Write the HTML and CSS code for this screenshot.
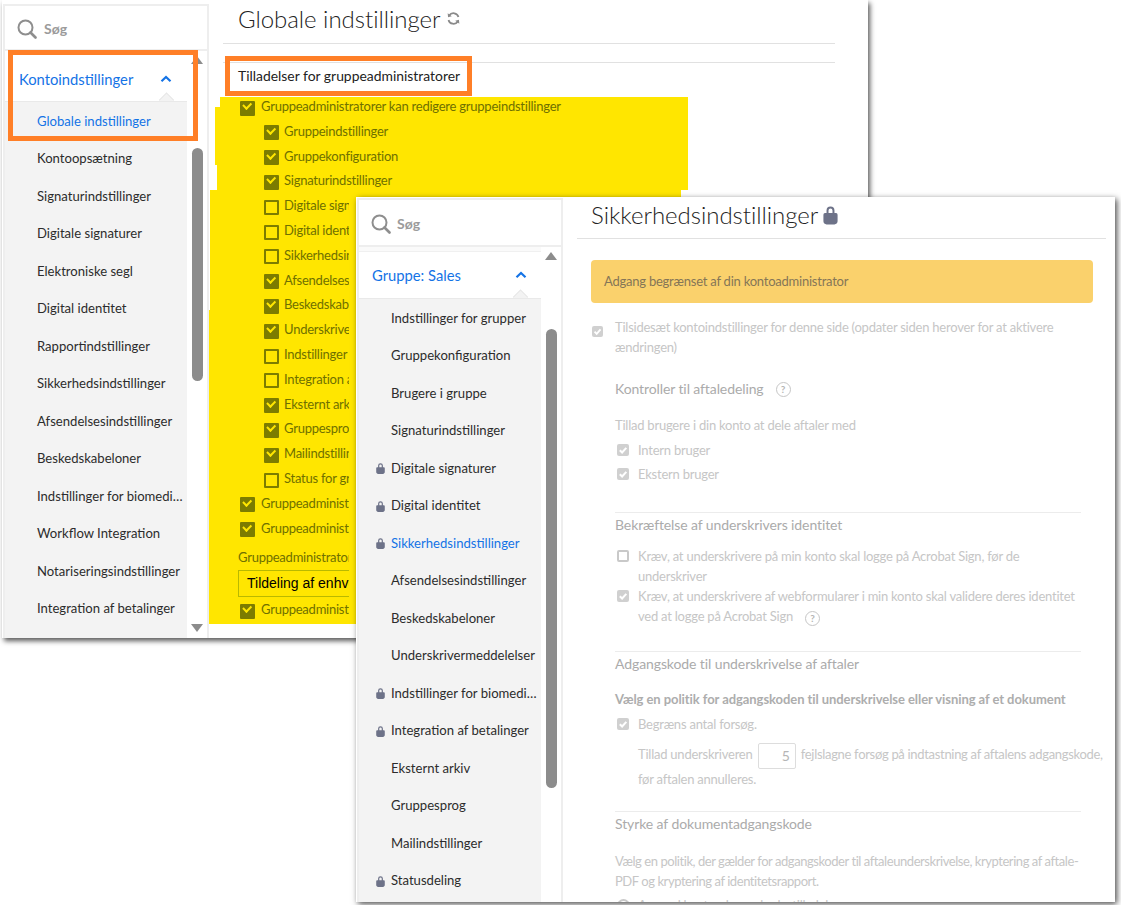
FILE: index.html
```html
<!DOCTYPE html>
<html lang="da">
<head>
<meta charset="utf-8">
<title>Indstillinger</title>
<link rel="stylesheet" href="styles.css">
</head>
<body>
<svg width="0" height="0" class="defs">
  <symbol id="lock" viewBox="0 0 12 14"><path d="M3.200 6V4.200a2.800 2.800 0 0 1 5.600 0V6h1.100a1.200 1.200 0 0 1 1.100 1.200v4.600c0 1.200-1 2.200-2.200 2.200H3.200c-1.200 0-2.200-1-2.200-2.200V7.200A1.200 1.200 0 0 1 2.100 6zm1.400 0h2.800V4.200a1.400 1.400 0 0 0-2.800 0z" fill="currentColor" fill-rule="evenodd"/></symbol>
  <symbol id="tick" viewBox="0 0 12 12"><path d="M2.800 6.200l2.300 2.300 4.200-4.700" fill="none" stroke="currentColor" stroke-width="2"/></symbol>
  <symbol id="search" viewBox="0 0 20 20"><circle cx="8.500" cy="8.500" r="7" fill="none" stroke="currentColor" stroke-width="2"/><path d="M13.500 13.500l5 5" stroke="currentColor" stroke-width="2.600" stroke-linecap="round"/></symbol>
  <symbol id="chev" viewBox="0 0 12 8"><path d="M1.500 6.200L6 2l4.500 4.200" fill="none" stroke="currentColor" stroke-width="2.200"/></symbol>
</svg>

<section class="window win-a">
  <svg class="yellow" viewBox="0 0 866 638" width="866" height="638"><polygon fill="#ffe600" points="218,97 686,97 686,190 679,190 679,230 355,230 355,624 203,624 203,552 206,552 206,521 204,521 204,405 207,405 207,310 208,310 208,190 215,190 215,165 213,165 213,107 218,107"/></svg>
  <aside class="sidebar">
    <div class="search"><svg class="search-icon"><use href="#search"/></svg><span>Søg</span></div>
    <div class="nav-wrap">
      <div class="nav">
        <div class="nav-head"><span>Kontoindstillinger</span><svg class="chev"><use href="#chev"/></svg><i class="notch"></i></div>
        <ul class="items">
          <li class="active">Globale indstillinger</li>
          <li>Kontoopsætning</li>
          <li>Signaturindstillinger</li>
          <li>Digitale signaturer</li>
          <li>Elektroniske segl</li>
          <li>Digital identitet</li>
          <li>Rapportindstillinger</li>
          <li>Sikkerhedsindstillinger</li>
          <li>Afsendelsesindstillinger</li>
          <li>Beskedskabeloner</li>
          <li>Indstillinger for biomedi…</li>
          <li>Workflow Integration</li>
          <li>Notariseringsindstillinger</li>
          <li>Integration af betalinger</li>
        </ul>
      </div>
      <div class="scroll"><i class="up"></i><b class="thumb"></b><i class="down"></i></div>
    </div>
  </aside>
  <main class="main">
    <h1>Globale indstillinger<svg class="refresh" viewBox="0 0 16 16"><path d="M13.300 6.500A5.500 5.500 0 0 0 3.400 4.800M2.700 9.500a5.500 5.500 0 0 0 9.900 1.700" fill="none" stroke="currentColor" stroke-width="1.900"/><path d="M1.800 2.500l.4 4.200 4-1.200zM14.200 13.500l-.4-4.200-4 1.200z" fill="currentColor"/></svg></h1>
    <h2>Tilladelser for gruppeadministratorer</h2>
    <div class="perms">
      <label class="perm on">Gruppeadministratorer kan redigere gruppeindstillinger</label>
      <label class="perm sub on">Gruppeindstillinger</label>
      <label class="perm sub on">Gruppekonfiguration</label>
      <label class="perm sub on">Signaturindstillinger</label>
      <label class="perm sub">Digitale signaturer</label>
      <label class="perm sub">Digital identitet</label>
      <label class="perm sub">Sikkerhedsindstillinger</label>
      <label class="perm sub on">Afsendelsesindstillinger</label>
      <label class="perm sub on">Beskedskabeloner</label>
      <label class="perm sub on">Underskrivermeddelelser</label>
      <label class="perm sub">Indstillinger for biometri</label>
      <label class="perm sub">Integration af betalinger</label>
      <label class="perm sub on">Eksternt arkiv</label>
      <label class="perm sub on">Gruppesprog</label>
      <label class="perm sub on">Mailindstillinger</label>
      <label class="perm sub">Status for gruppe</label>
      <label class="perm on">Gruppeadministratorer kan redigere brugere</label>
      <label class="perm on">Gruppeadministratorer kan se rapporter</label>
      <p class="perm-label">Gruppeadministratorer kan tildele</p>
      <div class="select">Tildeling af enhver bruger</div>
      <label class="perm on">Gruppeadministratorer kan oprette grupper</label>
    </div>
  </main>
  <i class="edge"></i>
  <i class="mark mark-nav"></i>
  <i class="mark mark-title"></i>
</section>

<section class="window win-b">
  <aside class="sidebar">
    <div class="search"><svg class="search-icon"><use href="#search"/></svg><span>Søg</span></div>
    <div class="nav-wrap">
      <div class="nav">
        <div class="nav-head"><span>Gruppe: Sales</span><svg class="chev"><use href="#chev"/></svg><i class="notch"></i></div>
        <ul class="items">
          <li>Indstillinger for grupper</li>
          <li>Gruppekonfiguration</li>
          <li>Brugere i gruppe</li>
          <li>Signaturindstillinger</li>
          <li class="locked"><svg class="lock"><use href="#lock"/></svg>Digitale signaturer</li>
          <li class="locked"><svg class="lock"><use href="#lock"/></svg>Digital identitet</li>
          <li class="locked active"><svg class="lock"><use href="#lock"/></svg>Sikkerhedsindstillinger</li>
          <li>Afsendelsesindstillinger</li>
          <li>Beskedskabeloner</li>
          <li>Underskrivermeddelelser</li>
          <li class="locked"><svg class="lock"><use href="#lock"/></svg>Indstillinger for biomedi…</li>
          <li class="locked"><svg class="lock"><use href="#lock"/></svg>Integration af betalinger</li>
          <li>Eksternt arkiv</li>
          <li>Gruppesprog</li>
          <li>Mailindstillinger</li>
          <li class="locked"><svg class="lock"><use href="#lock"/></svg>Statusdeling</li>
        </ul>
      </div>
      <div class="scroll"><i class="up"></i><b class="thumb"></b></div>
    </div>
  </aside>
  <main class="main">
    <h1>Sikkerhedsindstillinger<svg class="title-lock"><use href="#lock"/></svg></h1>
    <div class="banner">Adgang begrænset af din kontoadministrator</div>
    <div class="check override"><i class="box on"><svg><use href="#tick"/></svg></i><p>Tilsidesæt kontoindstillinger for denne side (opdater siden herover for at aktivere ændringen)</p></div>
    <div class="group first">
      <h3 class="h-share">Kontroller til aftaledeling<span class="help">?</span></h3>
      <p class="lead">Tillad brugere i din konto at dele aftaler med</p>
      <div class="check tight"><i class="box on"><svg><use href="#tick"/></svg></i><p>Intern bruger</p></div>
      <div class="check tight"><i class="box on"><svg><use href="#tick"/></svg></i><p>Ekstern bruger</p></div>
    </div>
    <div class="group rule verify">
      <h3>Bekræftelse af underskrivers identitet</h3>
      <div class="check"><i class="box"></i><p>Kræv, at underskrivere på min konto skal logge på Acrobat Sign, før de underskriver</p></div>
      <div class="check second"><i class="box on"><svg><use href="#tick"/></svg></i><p>Kræv, at underskrivere af webformularer i min konto skal validere deres identitet ved at logge på Acrobat Sign<span class="help help-inline">?</span></p></div>
    </div>
    <div class="group rule password">
      <h3>Adgangskode til underskrivelse af aftaler</h3>
      <p class="lead strong">Vælg en politik for adgangskoden til underskrivelse eller visning af et dokument</p>
      <div class="check tight"><i class="box on"><svg><use href="#tick"/></svg></i><p>Begræns antal forsøg.</p></div>
      <p class="attempts">Tillad underskriveren <span class="num">5</span> <span class="rest">fejlslagne forsøg på indtastning af aftalens adgangskode,</span> før aftalen annulleres.</p>
    </div>
    <div class="group rule last">
      <h3>Styrke af dokumentadgangskode</h3>
      <p class="lead wide">Vælg en politik, der gælder for adgangskoder til aftaleunderskrivelse, kryptering af aftale-PDF og kryptering af identitetsrapport.</p>
      <div class="check radio-row"><i class="radio"></i><p>Anvend kontoadgangskodestilladelser</p></div>
    </div>
  </main>
</section>
</body>
</html>
```
FILE: styles.css
```css
* { box-sizing: border-box; }
html, body { margin: 0; padding: 0; }
body { width: 1121px; height: 905px; position: relative; overflow: hidden; background: #fff; font-family: Lato, "Noto Sans", sans-serif; color: #2c2c2c; }
.defs { position: absolute; }
ul, p, h1, h2, h3 { margin: 0; padding: 0; }
li { list-style: none; }
.window { position: absolute; display: flex; background: #fff; overflow: hidden; }
.win-a { left: 2px; top: 0; width: 866px; height: 638px; padding: 4px 0 0 1px; box-shadow: 2px 3px 5px rgba(0,0,0,.65); }
.win-b { left: 356px; top: 197px; width: 759px; height: 705px; padding: 1px 0 0 1px; box-shadow: 2px 2px 6px rgba(0,0,0,.7); }
.yellow { position: absolute; left: 0; top: 0; }
.sidebar { position: relative; width: 206px; flex: none; border: 2px solid #eee; border-bottom: 0; display: flex; flex-direction: column; }
.search { display: flex; align-items: center; padding-left: 12px; border-bottom: 2px solid #eee; color: #8e8e8e; font-size: 14px; font-weight: 700; flex: none; }
.win-a .search { height: 45px; padding-top: 2px; gap: 7px; }
.win-b .search { height: 47px; padding-top: 2px; gap: 6px; }
.search span { color: #9b9b9b; }
.search-icon { width: 20px; height: 20px; }
.nav-wrap { flex: 1; display: flex; min-height: 0; background: #fff; }
.nav { width: 182px; flex: none; }
.nav-head { position: relative; display: flex; align-items: center; justify-content: space-between; color: #1473e6; font-size: 14.750px; background: #fff; }
.win-a .nav-head { height: 50px; padding: 6px 15px 0 14px; }
.win-b .nav-head { height: 51px; padding: 5px 14px 0 13px; box-shadow: inset 0 4px 0 #fafafa, inset 0 5px 0 #f0f0f0; }
.chev { width: 12px; height: 8px; color: #1473e6; }
.notch { position: absolute; right: 15px; bottom: -6px; width: 11px; height: 11px; background: #f3f3f3; transform: rotate(45deg); box-shadow: -1px -1px 0 #e6e6e6; }
.items { background: #f3f3f3; padding-top: .5px; font-size: 13.100px; position: relative; border-top: 1px solid #e9e9e9; height: 620px; }
.items li { height: 37.500px; line-height: 37px; padding-left: 32px; color: #2c2c2c; white-space: nowrap; }
.items li.active { color: #1473e6; }
.items li.locked { display: flex; align-items: center; padding-left: 16px; }
.lock { width: 11px; height: 12px; color: #6d7288; flex: none; margin-right: 5px; }
.scroll { flex: 1; display: flex; flex-direction: column; align-items: center; padding-top: 5px; position: relative; }
.scroll .up { width: 0; height: 0; border: 6px solid transparent; border-top: 0; border-bottom: 8px solid #8c8c8c; }
.scroll .down { position: absolute; bottom: 6px; width: 0; height: 0; border: 6px solid transparent; border-bottom: 0; border-top: 8px solid #8c8c8c; }
.thumb { display: block; width: 11px; background: #8c8c8c; border-radius: 6px; }
.win-a .thumb { margin-top: 84px; height: 233px; }
.win-b .thumb { margin-top: 69px; height: 459px; }
.main { position: relative; flex: 1; min-width: 0; }
h1 { font-weight: 300; font-size: 24px; letter-spacing: -.03px; color: #222; display: flex; align-items: center; white-space: nowrap; }
.win-a h1 { margin: 0 33px 0 14px; padding: 0 0 11px 15px; height: 40px; border-bottom: 1px solid #e1e1e1; }
.refresh { width: 15px; height: 15px; margin-left: 6px; color: #8a8a8a; }
.win-a h2 { margin: 18px 33px 0 14px; border-top: 1px solid #e1e1e1; font-weight: 400; font-size: 13.900px; color: #222; padding-left: 15px; height: 31.600px; line-height: 26px; }
.perms { padding-left: 31px; position: relative; color: #6f7000; font-size: 13px; letter-spacing: -.24px; }
.perm { display: flex; align-items: center; height: 24.800px; white-space: nowrap; position: relative; padding-left: 21px; }
.perm::before { content: ""; position: absolute; left: 0; top: 7px; width: 11px; height: 11px; border: 2px solid #7c7c00; border-radius: 1px; }
.perm.on::before { background: #7c7c00; }
.perm.on::after { content: ""; position: absolute; left: 2.500px; top: 8.500px; width: 6px; height: 3.500px; border-left: 2px solid #ffe600; border-bottom: 2px solid #ffe600; transform: rotate(-45deg); }
.perm.sub { margin-left: 24px; padding-left: 20px; }
.perm-label { margin: 10px 0 0 -2px; height: 14px; line-height: 14px; white-space: nowrap; }
.select { margin: 6px 0 0 -2px; height: 27px; width: 400px; border: 1px solid #b9b900; font: 14px/25px "Liberation Sans", sans-serif; letter-spacing: 0; color: #000; padding-left: 8px; }
.edge { position: absolute; left: 347px; top: 190px; width: 8px; height: 434px; background: #ffe600; }
.mark { position: absolute; border: 5px solid #ff7f27; }
.mark-nav { left: 6px; top: 50px; width: 190px; height: 91px; }
.mark-title { left: 223px; top: 56px; width: 247px; height: 40px; }
.win-b .main { padding: 0 9px 0 14px; color: #c6c6c6; font-size: 13px; letter-spacing: -.23px; }
.win-b h1 { height: 41px; padding: 0 0 8px 14px; border-bottom: 1px solid #e1e1e1; color: #222; }
.title-lock { width: 17px; height: 21px; color: #6d7288; margin-left: 4px; }
.banner { margin: 21px 13px 0 14px; height: 43px; line-height: 43px; background: #fad16c; border-radius: 4px; padding-left: 13px; color: #857657; }
.check { display: flex; position: relative; padding-left: 23px; line-height: 20px; margin-top: 10px; }
.box { position: absolute; left: 2px; top: 4px; width: 12px; height: 12px; border-radius: 2px; border: 2px solid #c9c9c9; background: #fff; color: #fff; display: block; }
.box.on { background: #d0d0d0; border: 0; }
.box svg { width: 12px; height: 12px; display: block; }
.radio { position: absolute; left: 2px; top: 4px; width: 13px; height: 13px; border-radius: 50%; border: 2px solid #c9c9c9; }
.override { margin: 14px 9px 0 14px; padding-left: 24px; }
.override .box { top: 9px; left: 1px; width: 11px; height: 11px; }
.override .box svg { width: 11px; height: 11px; }
.group { margin: 0 25px 0 38px; }
.group.rule { border-top: 1px solid #ececec; }
.group.first { padding-bottom: 28px; }
.group.verify { padding-bottom: 25px; }
.group.password { padding-bottom: 20px; }
.group h3 { font-size: 14px; font-weight: 400; letter-spacing: -.1px; color: #ababab; line-height: 24px; display: flex; align-items: center; }
.group h3 + .check { margin-top: 9px; }
.group .check.second { margin-top: 0; }
.h-share { margin-top: 20px; }
.lead { line-height: 20px; margin-top: 14px; }
.lead.strong { color: #adadad; font-weight: 700; margin-top: 13px; letter-spacing: -.07px; white-space: nowrap; }
.lead.wide { margin: 15px -6px 0 0; letter-spacing: -.44px; }
.check.tight { margin-top: 4px; }
.lead + .check.tight { margin-top: 5px; }
.check.radio-row { margin-top: 4px; }
.help { display: inline-flex; width: 15px; height: 15px; margin-left: 12px; border: 1.500px solid #c6c6c6; border-radius: 50%; font-size: 10px; letter-spacing: 0; align-items: center; justify-content: center; color: #b5b5b5; font-weight: 700; }
.help-inline { vertical-align: -1px; margin-bottom: -2px; }
.attempts { margin: 8px -30px 0 23px; line-height: 24px; }
.rest { letter-spacing: -.31px; }
.num { display: inline-block; width: 38px; height: 26px; border: 1px solid #ddd; border-radius: 2px; text-align: right; padding-right: 5px; line-height: 24px; margin: -2px 2px; color: #b5b5b5; font-size: 14px; vertical-align: middle; }
```
